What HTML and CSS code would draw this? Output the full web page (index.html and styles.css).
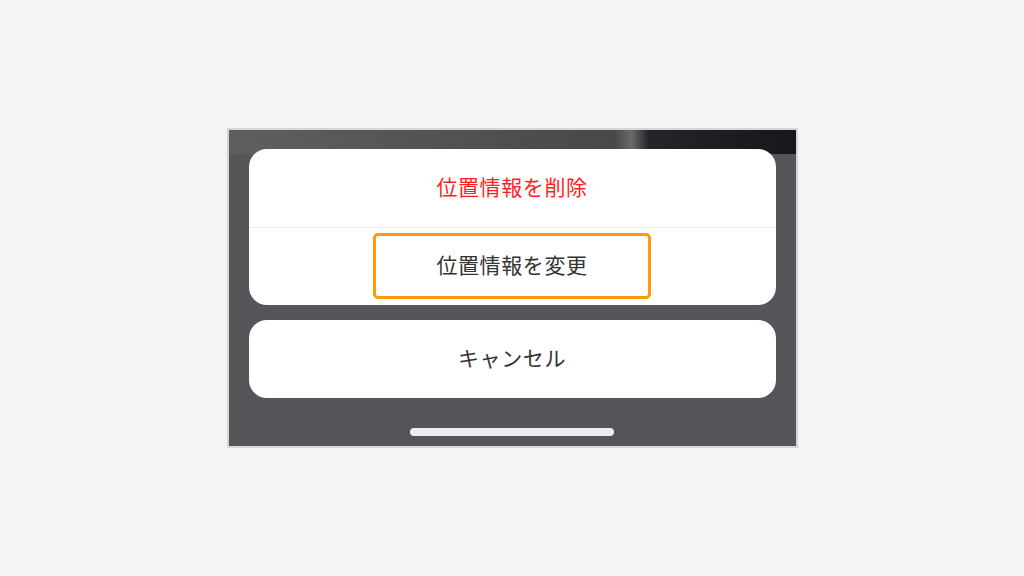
FILE: index.html
```html
<!DOCTYPE html>
<html lang="ja">
<head>
  <meta charset="UTF-8">
  <title>位置情報</title>
  <meta name="viewport" content="width=device-width, initial-scale=1.0">
  <link rel="stylesheet" href="styles.css">
</head>
<body>

  <div class="screen">
    <div class="photo-strip"></div>

    <div class="sheet">
      <div class="group">
        <div class="action danger">位置情報を削除</div>
        <div class="action">
          <div class="highlight">位置情報を変更</div>
        </div>
      </div>

      <div class="group">
        <div class="action">キャンセル</div>
      </div>

      <div class="home-bar"></div>
    </div>
  </div>

</body>
</html>
```

FILE: styles.css
```css
body {
  margin: 0;
  height: 576px;
  background: #f4f4f4;
  font-family: "Noto Sans CJK JP", "Noto Sans", sans-serif;
  display: flex;
  align-items: center;
  justify-content: center;
}

.screen {
  box-sizing: border-box;
  width: 571px;
  height: 320px;
  margin-top: -1px;
  border: 2px solid #d6d6d6;
  background: #55565a;
  position: relative;
  overflow: hidden;
}

/* blurred photo peeking out above the sheet */
.photo-strip {
  position: absolute;
  left: 0;
  right: 0;
  top: 0;
  height: 24px;
  background: linear-gradient(90deg, #5e5f5f 0%, #4f5050 45%, #484848 68%, #6a6a6a 71%, #23252a 74%, #15171b 100%);
}

.sheet {
  position: relative;
  padding: 19px 20px 0;
  display: flex;
  flex-direction: column;
  align-items: stretch;
}

.group {
  background: #fff;
  border-radius: 18px;
  overflow: hidden;
  margin-bottom: 15px;
}

.action {
  box-sizing: border-box;
  height: 78px;
  padding-bottom: 4px;
  display: flex;
  align-items: center;
  justify-content: center;
  font-size: 21px;
  letter-spacing: 0.6px;
  color: #333;
}

.action + .action {
  border-top: 1px solid #f0f0f0;
  padding-bottom: 0;
}

.danger {
  color: #ff1f1f;
}

.highlight {
  box-sizing: border-box;
  width: 278px;
  height: 66px;
  padding-bottom: 4px;
  border: 3px solid #ff9a0a;
  border-radius: 5px;
  display: flex;
  align-items: center;
  justify-content: center;
}

.home-bar {
  width: 204px;
  height: 8px;
  margin: 15px auto 0;
  border-radius: 4px;
  background: #ededed;
}
```
